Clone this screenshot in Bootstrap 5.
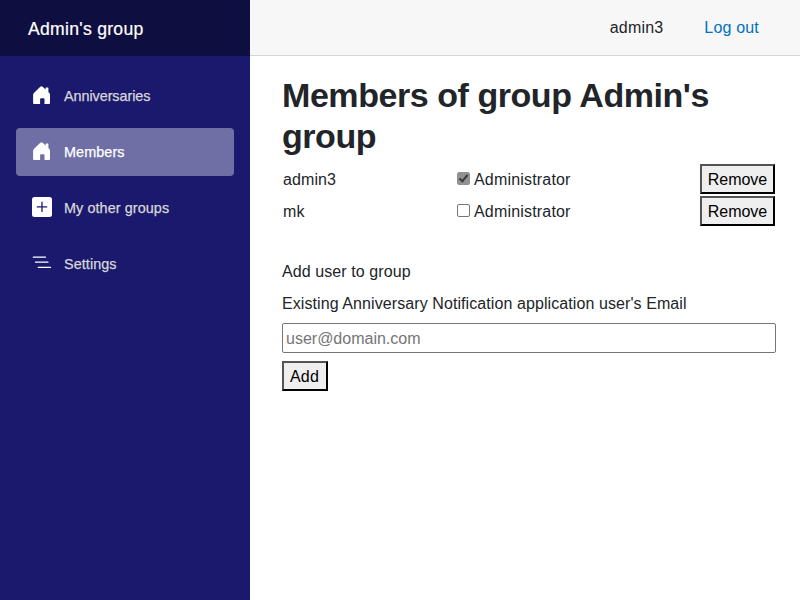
<!DOCTYPE html>
<html lang="en">
<head>
<meta charset="utf-8">
<meta name="viewport" content="width=device-width, initial-scale=1">
<title>Members</title>
<link href="https://cdn.jsdelivr.net/npm/bootstrap@5.3.0/dist/css/bootstrap.min.css" rel="stylesheet">
<style>
body { font-family: "Liberation Sans", Arial, sans-serif; color: #212529; letter-spacing: .085px; }
.sidebar { width: 250px; background: #1a196e; }
.brand-row { height: 56px; background: #0f0e40; padding-left: 28px; }
.brand-text { font-size: 17.6px; letter-spacing: .28px; padding-top: 2px; -webkit-text-stroke: .2px currentColor; }
.side-links { padding: 16px 16px 0; gap: 8px; font-size: 14.4px; letter-spacing: .08px; }
.side-links .nav-link { height: 48px; color: #d7d7d7; border-radius: 4px; padding: 0 16px; }
.side-links .nav-link.active { background: #706fa5; color: #fff; }
.side-links span { padding-top: 2px; -webkit-text-stroke: .25px currentColor; }
.side-links .tight { letter-spacing: -.06px; }
.side-links svg { width: 20px; height: 20px; margin: -2px 12px 0 0; color: #fff; }
.top-row { height: 56px; background: #f7f7f7; border-bottom: 1px solid #d6d5d5; padding-right: 41px; gap: 41px; letter-spacing: .18px; }
.top-row a { color: #0071c1; }
.page-body { padding: 18.6px 24px 0 32px; }
.page-title { font-size: 34px; font-weight: 700; line-height: 41px; letter-spacing: -.44px; margin-bottom: 6.6px; }
.members { border-collapse: collapse; }
.members td { padding: 1px; height: 32px; }
.members span { padding-top: 2px; letter-spacing: .18px; }
.members td:first-child { padding-top: 3px; }
.plain-btn { height: 30px; padding: 2px 6px 0; font-size: 16px; line-height: 24px; color: #000; background: #efefef; border: 2px outset #000; display: block; letter-spacing: 0; }
.members .plain-btn { width: 75px; padding-left: 5px; padding-right: 5px; letter-spacing: -.02px; }
.add-btn { width: 46px; padding-left: 5px; letter-spacing: .25px; }
.check-box { appearance: none; width: 13px; height: 13px; margin: -1px 4px 0 0; border: 1px solid #767676; border-radius: 2px; background: #fff; display: flex; justify-content: center; }
.check-box:checked { border-color: #929292; background: #929292; }
.check-box:checked::before { content: ""; width: 5px; height: 9px; border: solid #3b3b3b; border-width: 0 2px 2px 0; transform: rotate(40deg); }
.email-box { height: 30px; padding: 3px 3px 1px; border: 1px solid #767676; border-radius: 2px; letter-spacing: 0; }
.email-box::placeholder { color: #757575; opacity: 1; }
.add-form { padding-top: 25px; }
.add-form label { margin-bottom: 7px; }
</style>
<script src="https://cdn.jsdelivr.net/npm/bootstrap@5.3.0/dist/js/bootstrap.bundle.min.js"></script>
</head>
<body>
<div class="d-flex min-vh-100">
  <aside class="sidebar flex-shrink-0">
    <div class="brand-row d-flex align-items-center text-white"><span class="brand-text">Admin's group</span></div>
    <nav class="side-links nav flex-column">
      <a class="nav-link d-flex align-items-center" href="#"><svg viewBox="0 0 20 20" fill="currentColor"><path d="M1.100 10q0-1.300.8-2.100L8.300 1.800q1.200-1.100 2.400 0l2.900 2.700V3q0-.5.500-.5h1.800q.5 0 .5.500v4.100l.9.900q.7.700.7 2v8q0 1-1 1h-4.500v-4.700q0-1-1-1H9.100q-1 0-1 1V19h-6q-1 0-1-1z"/></svg><span class="tight">Anniversaries</span></a>
      <a class="nav-link active d-flex align-items-center" href="#"><svg viewBox="0 0 20 20" fill="currentColor"><path d="M1.100 10q0-1.300.8-2.100L8.300 1.800q1.200-1.100 2.400 0l2.900 2.700V3q0-.5.500-.5h1.800q.5 0 .5.500v4.100l.9.900q.7.700.7 2v8q0 1-1 1h-4.500v-4.700q0-1-1-1H9.100q-1 0-1 1V19h-6q-1 0-1-1z"/></svg><span>Members</span></a>
      <a class="nav-link d-flex align-items-center" href="#"><svg viewBox="0 0 20 20"><rect width="20" height="20" rx="2.500" fill="currentColor"/><path d="M10 5.200v9.400M5.300 9.900h9.400" stroke="#1a196e" stroke-width="1.300" stroke-linecap="round"/></svg><span>My other groups</span></a>
      <a class="nav-link d-flex align-items-center" href="#"><svg viewBox="0 0 20 20" stroke="currentColor" stroke-width="1.250" stroke-linecap="round"><path d="M1.300 4.200h12.200M3.500 9.200h12.500M6.300 14.400h12.200"/></svg><span>Settings</span></a>
    </nav>
  </aside>
  <main class="flex-grow-1">
    <div class="top-row d-flex justify-content-end align-items-center">
      <span>admin3</span><a class="text-decoration-none" href="#">Log out</a>
    </div>
    <div class="page-body">
      <h1 class="page-title">Members of group Admin's group</h1>
      <table class="members w-100 mb-2">
        <colgroup><col style="width:174px"><col><col style="width:76px"></colgroup>
        <tbody>
          <tr><td>admin3</td><td><label class="d-flex align-items-center"><input class="check-box" type="checkbox" checked disabled><span>Administrator</span></label></td><td><button class="plain-btn">Remove</button></td></tr>
          <tr><td>mk</td><td><label class="d-flex align-items-center"><input class="check-box" type="checkbox"><span>Administrator</span></label></td><td><button class="plain-btn">Remove</button></td></tr>
        </tbody>
      </table>
      <form class="add-form">
        <p class="mb-2">Add user to group</p>
        <label class="d-block" for="email">Existing Anniversary Notification application user's Email</label>
        <input class="email-box d-block w-100 mb-2" id="email" type="email" placeholder="user@domain.com">
        <button class="plain-btn add-btn" type="button">Add</button>
      </form>
    </div>
  </main>
</div>
</body>
</html>
